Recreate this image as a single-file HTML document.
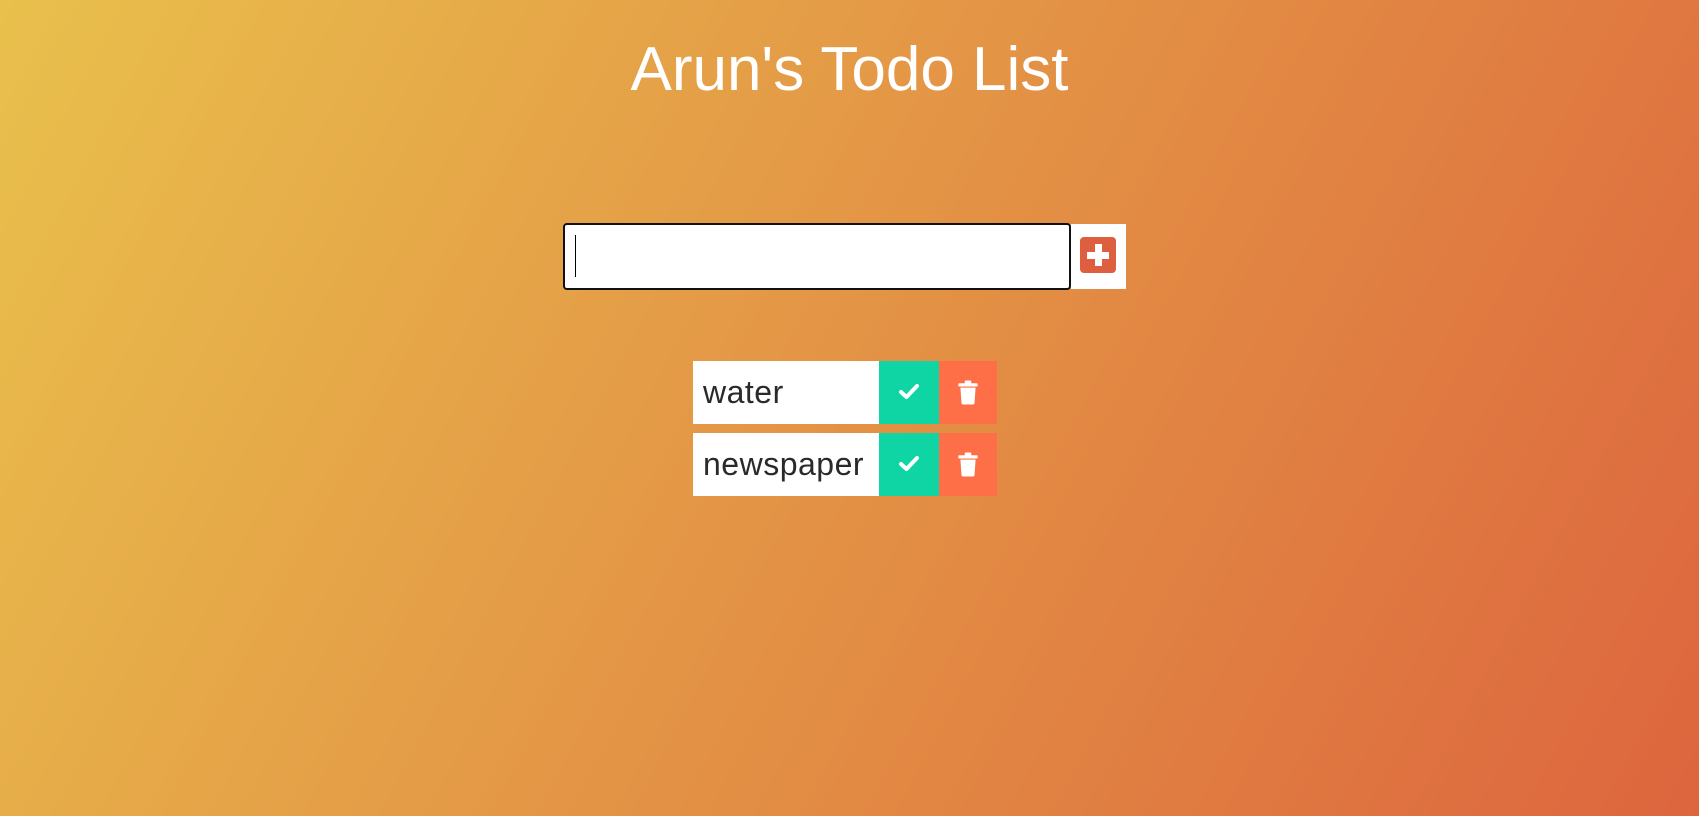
<!DOCTYPE html>
<html><head><meta charset="utf-8"><style>
html,body{margin:0;width:1699px;height:816px;overflow:hidden}
body{background:linear-gradient(118deg,#e9c04c 0%,#dd653e 100%);font-family:"Liberation Sans",sans-serif;position:relative}
h1{position:absolute;top:30px;left:0;width:1699px;text-align:center;margin:0;color:#fff;font-weight:normal;font-size:62px;line-height:80px}
.inp{position:absolute;left:563px;top:223px;background:#fff;border:2px solid #111;border-radius:4px;box-sizing:content-box;width:504px;height:63px}
.inp:before{content:"";position:absolute;left:10px;top:10px;width:1px;height:42px;background:#000}
.btn{position:absolute;left:1071px;top:224px;width:55px;height:65px;background:#fff}
.plus{position:absolute;left:9px;top:13px;width:36px;height:36px;background:#dd5f3f;border-radius:4px}
.plus:before{content:"";position:absolute;left:15px;top:7px;width:7px;height:22px;background:#fff}
.plus:after{content:"";position:absolute;left:7px;top:15px;width:22px;height:7px;background:#fff}
.row{position:absolute;left:693px;width:304px;height:63px}
.t{position:absolute;left:0;top:0;width:186px;height:63px;background:#fff;color:#2a2a2a;font-size:32px;line-height:63px;padding-left:10px;box-sizing:border-box;letter-spacing:0.5px}
.g{position:absolute;left:186px;top:0;width:60px;height:63px;background:#0fd4a4}
.r{position:absolute;left:246px;top:0;width:58px;height:63px;background:#fe6f47}
svg{position:absolute}
</style></head><body>
<h1>Arun's Todo List</h1>
<div class="inp"></div>
<div class="btn"><div class="plus"></div></div>
<div class="row" style="top:361px">
<div class="t">water</div>
<div class="g"><svg style="left:19px;top:21px" width="22" height="20" viewBox="0 0 22 20"><path d="M3 10 L8.5 15 L19 4" stroke="#fff" stroke-width="4" fill="none" stroke-linecap="round" stroke-linejoin="round"/></svg></div>
<div class="r"><svg style="left:18px;top:19px" width="22" height="25" viewBox="0 0 20 23"><rect x="1" y="3" width="18" height="3" rx="1" fill="#fff"/><rect x="7" y="0.5" width="6" height="3" rx="1" fill="#fff"/><path d="M3 7 H17 L16 21 Q16 22.5 14.5 22.5 H5.5 Q4 22.5 4 21 Z" fill="#fff"/></svg></div>
</div>
<div class="row" style="top:433px">
<div class="t">newspaper</div>
<div class="g"><svg style="left:19px;top:21px" width="22" height="20" viewBox="0 0 22 20"><path d="M3 10 L8.5 15 L19 4" stroke="#fff" stroke-width="4" fill="none" stroke-linecap="round" stroke-linejoin="round"/></svg></div>
<div class="r"><svg style="left:18px;top:19px" width="22" height="25" viewBox="0 0 20 23"><rect x="1" y="3" width="18" height="3" rx="1" fill="#fff"/><rect x="7" y="0.5" width="6" height="3" rx="1" fill="#fff"/><path d="M3 7 H17 L16 21 Q16 22.5 14.5 22.5 H5.5 Q4 22.5 4 21 Z" fill="#fff"/></svg></div>
</div>
</body></html>
